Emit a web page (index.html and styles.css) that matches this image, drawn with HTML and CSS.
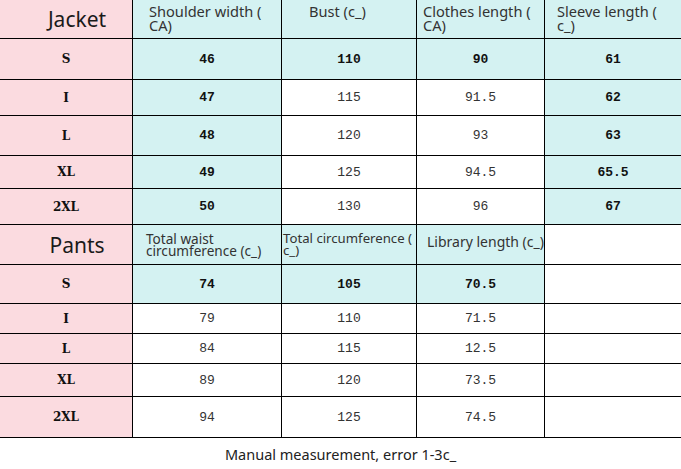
FILE: index.html
```html
<!DOCTYPE html>
<html>
<head>
<meta charset="utf-8">
<link rel="stylesheet" href="styles.css">
</head>
<body>
<div class="sheet">
  <div class="chart">
    <div class="cell pink title">Jacket</div>
    <div class="cell cyan hd hd-shoulder">Shoulder width (<br>CA)</div>
    <div class="cell cyan hd hd-bust">Bust (c_)</div>
    <div class="cell cyan hd hd-clothes">Clothes length (<br>CA)</div>
    <div class="cell cyan hd hd-sleeve">Sleeve length (<br>c_)</div>

    <div class="cell pink size">S</div>
    <div class="cell cyan num b">46</div>
    <div class="cell cyan num b">110</div>
    <div class="cell cyan num b">90</div>
    <div class="cell cyan num b">61</div>

    <div class="cell pink size">I</div>
    <div class="cell cyan num b">47</div>
    <div class="cell num">115</div>
    <div class="cell num">91.5</div>
    <div class="cell cyan num b">62</div>

    <div class="cell pink size">L</div>
    <div class="cell cyan num b">48</div>
    <div class="cell num">120</div>
    <div class="cell num">93</div>
    <div class="cell cyan num b">63</div>

    <div class="cell pink size">XL</div>
    <div class="cell cyan num b">49</div>
    <div class="cell num">125</div>
    <div class="cell num">94.5</div>
    <div class="cell cyan num b">65.5</div>

    <div class="cell pink size">2XL</div>
    <div class="cell cyan num b">50</div>
    <div class="cell num">130</div>
    <div class="cell num">96</div>
    <div class="cell cyan num b">67</div>

    <div class="cell pink title">Pants</div>
    <div class="cell cyan hd2 hd-waist">Total waist<br>circumference (c_)</div>
    <div class="cell cyan hd2 hd-circ">Total circumference (<br>c_)</div>
    <div class="cell cyan hd3">Library length (c_)</div>
    <div class="cell"></div>

    <div class="cell pink size">S</div>
    <div class="cell cyan num b">74</div>
    <div class="cell cyan num b">105</div>
    <div class="cell cyan num b">70.5</div>
    <div class="cell"></div>

    <div class="cell pink size">I</div>
    <div class="cell num">79</div>
    <div class="cell num">110</div>
    <div class="cell num">71.5</div>
    <div class="cell"></div>

    <div class="cell pink size">L</div>
    <div class="cell num">84</div>
    <div class="cell num">115</div>
    <div class="cell num">12.5</div>
    <div class="cell"></div>

    <div class="cell pink size">XL</div>
    <div class="cell num">89</div>
    <div class="cell num">120</div>
    <div class="cell num">73.5</div>
    <div class="cell"></div>

    <div class="cell pink size">2XL</div>
    <div class="cell num">94</div>
    <div class="cell num">125</div>
    <div class="cell num">74.5</div>
    <div class="cell"></div>
  </div>
  <p class="note">Manual measurement, error 1-3c_</p>
</div>
</body>
</html>
```

FILE: styles.css
```css
html, body {
  margin: 0;
  padding: 0;
  background: #fff;
  overflow: hidden;
}

.sheet {
  width: 681px;
  height: 469px;
  font-family: "Noto Sans", "Open Sans", sans-serif;
  color: #111;
}

.chart {
  display: grid;
  grid-template-columns: 132px 148px 134px 127px 1fr;
  grid-template-rows: 38px 40px 35px 39px 32px 35px 39px 38px 29px 29px 32px 40px;
  gap: 1px;
  background: #000;
  border-bottom: 1px solid #000;
}

.cell {
  background: #fff;
  min-width: 0;
}

.pink { background: #fbdbe0; }
.cyan { background: #d4f2f2; }

.title {
  display: flex;
  align-items: center;
  justify-content: center;
  padding-left: 22px;
  font-size: 21px;
  color: #1a1a1a;
}

.hd {
  font-size: 14.6px;
  line-height: 13.5px;
  color: #333;
}
.hd-shoulder { padding: 5px 0 0 16px; }
.hd-bust { padding: 5px 0 0 27px; }
.hd-clothes { padding: 5px 0 0 6px; }
.hd-sleeve { padding: 5px 0 0 12px; }

.hd2 {
  font-size: 13.6px;
  line-height: 11.5px;
  color: #333;
  padding-top: 8px;
  white-space: nowrap;
}
.hd-waist { padding-left: 13px; }
.hd-circ { padding-left: 1px; font-size: 13.2px; }

.hd3 {
  font-size: 14px;
  line-height: 16px;
  color: #333;
  padding: 9px 0 0 10px;
  white-space: nowrap;
  position: relative;
  z-index: 1;
}

.size {
  display: flex;
  align-items: center;
  justify-content: center;
  font-family: "DejaVu Serif", "Liberation Serif", serif;
  font-weight: bold;
  font-size: 12px;
  color: #111;
}

.num {
  display: flex;
  align-items: center;
  justify-content: center;
  font-family: "Liberation Mono", monospace;
  font-size: 13px;
  color: #333;
}
.num.b {
  font-weight: bold;
  color: #111;
}

.note {
  margin: 0;
  padding-top: 6px;
  text-align: center;
  font-size: 14.5px;
  color: #222;
}
```
